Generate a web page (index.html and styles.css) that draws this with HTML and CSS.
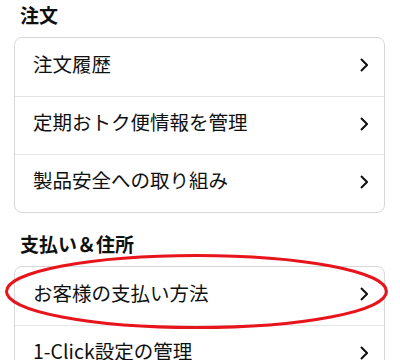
FILE: index.html
```html
<!DOCTYPE html>
<html lang="ja">
<head>
<meta charset="utf-8">
<link rel="stylesheet" href="styles.css">
</head>
<body>
<div class="page">
  <h2 class="heading first">注文</h2>
  <div class="card">
    <div class="row"><span class="label">注文履歴</span><svg class="chev" viewBox="0 0 8 14"><polyline points="1,1 7,7 1,13"/></svg></div>
    <div class="row"><span class="label">定期おトク便情報を管理</span><svg class="chev" viewBox="0 0 8 14"><polyline points="1,1 7,7 1,13"/></svg></div>
    <div class="row"><span class="label">製品安全への取り組み</span><svg class="chev" viewBox="0 0 8 14"><polyline points="1,1 7,7 1,13"/></svg></div>
  </div>
  <h2 class="heading">支払い＆住所</h2>
  <div class="card">
    <div class="row"><span class="label">お客様の支払い方法</span><svg class="chev" viewBox="0 0 8 14"><polyline points="1,1 7,7 1,13"/></svg></div>
    <div class="row"><span class="label">1-Click設定の管理</span><svg class="chev" viewBox="0 0 8 14"><polyline points="1,1 7,7 1,13"/></svg></div>
  </div>
  <svg class="mark" width="400" height="360" viewBox="0 0 400 360"><ellipse cx="196.5" cy="291.5" rx="190" ry="36"/></svg>
</div>
</body>
</html>
```
FILE: styles.css
```css
html, body {
  margin: 0;
  padding: 0;
  background: #fff;
}
body {
  font-family: "Noto Sans CJK JP", "Noto Sans", sans-serif;
  color: #0f1111;
  overflow: hidden;
}
.page {
  position: relative;
  width: 400px;
  height: 360px;
  padding: 0 15px 0 14px;
  box-sizing: border-box;
  overflow: hidden;
}
.heading {
  margin: 17px 0 8px 6px;
  font-size: 19px;
  line-height: 28px;
  font-weight: 700;
}
.heading.first {
  margin-top: 0;
  padding-top: 1px;
}
.card {
  border: 1px solid #d5d9d9;
  border-radius: 8px;
  background: #fff;
}
.row {
  display: flex;
  align-items: center;
  justify-content: space-between;
  box-sizing: border-box;
  height: 58px;
  padding: 0 16px 4px 18px;
  font-size: 19.5px;
  border-top: 1px solid #e3e6e6;
}
.row:first-child {
  border-top: none;
}
.label {
  margin-bottom: 4px;
}
.chev {
  width: 8px;
  height: 14px;
  fill: none;
  stroke: #0f1111;
  stroke-width: 2;
}
.mark {
  position: absolute;
  left: 0;
  top: 0;
  pointer-events: none;
}
.mark ellipse {
  fill: none;
  stroke: #e8141c;
  stroke-width: 3;
}
```
